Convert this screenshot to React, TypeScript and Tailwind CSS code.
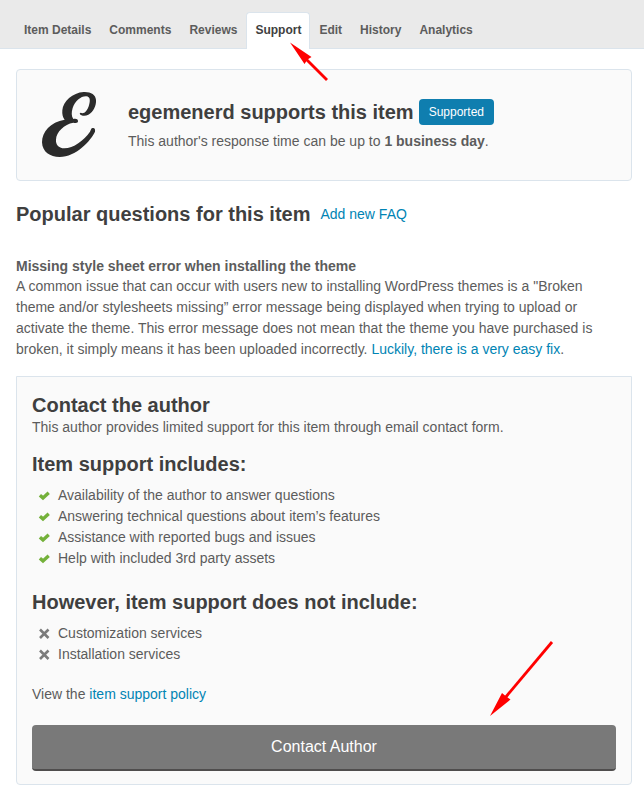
const tabs = ['Item Details', 'Comments', 'Reviews', 'Support', 'Edit', 'History', 'Analytics'];

const included = [
  'Availability of the author to answer questions',
  'Answering technical questions about item’s features',
  'Assistance with reported bugs and issues',
  'Help with included 3rd party assets',
];

const excluded = ['Customization services', 'Installation services'];

function AuthorLogo() {
  return (
    <svg className="h-[67px] w-14 shrink-0" viewBox="93 93 168 201" role="img" aria-label="egemenerd">
      <path
        fill="#2b2b2b"
        d="M209 161 C213 168 226 169 235 164 C251 155 259 137 258 120 C257 103 242 95 221 96 C188 98 159 124 157 151 C156 163 158 172 164 179 C121 186 96 216 96 247 C97 276 120 291 149 291 C198 290 242 243 255 215 C256 208 254 203 248 204 C243 204 244 208 240 215 C222 241 190 265 163 265 C145 264 137 253 138 239 C139 216 163 192 190 188 C199 190 204 189 204 183 C204 176 196 175 190 177 C184 169 184 157 188 144 C195 123 213 108 229 109 C241 110 241 122 237 136 C233 150 225 160 217 160 C213 158 211 157 209 161 Z"
      />
    </svg>
  );
}

function CheckIcon() {
  return (
    <svg className="h-3 w-3 shrink-0" viewBox="0 0 12 12" fill="none" stroke="#74b13a" strokeWidth="3.4" aria-hidden="true">
      <path d="M1.9 5.2 5 7.9 10.7 2.8" />
    </svg>
  );
}

function CrossIcon() {
  return (
    <svg className="h-3 w-3 shrink-0" viewBox="0 0 12 12" fill="none" stroke="#7b7b7b" strokeWidth="2.6" aria-hidden="true">
      <path d="M2 1.5 10.5 10M10.5 1.5 2 10" />
    </svg>
  );
}

export default function App() {
  return (
    <div
      className="relative bg-white text-sm leading-[21px] text-[#5c5c5c]"
      style={{ fontFamily: '"Liberation Sans", Arial, sans-serif' }}
    >
      <nav className="flex border-b border-[#dbe4ec] bg-[#eaeaea] px-[15px] pt-3">
        {tabs.map((tab) => (
          <a
            key={tab}
            href="#"
            className={
              tab === 'Support'
                ? '-mb-px rounded-t border border-b-0 border-[#dbe4ec] bg-white px-2 pt-[7px] pb-2 text-xs leading-5 font-bold text-[#3f3f3f]'
                : 'border border-b-0 border-transparent px-2 pt-[7px] pb-2 text-xs leading-5 font-bold'
            }
          >
            {tab}
          </a>
        ))}
      </nav>

      <main className="pt-5 pr-3 pb-4 pl-4">
        <section className="flex items-center gap-[31px] rounded border border-[#dbe4ec] bg-[#fafafa] pt-[21px] pr-4 pb-[22px] pl-6">
          <AuthorLogo />
          <div className="pt-[6px] pb-1">
            <div className="flex flex-wrap items-center gap-[5px]">
              <h2 className="text-xl leading-6 font-bold text-[#3f3f3f]">egemenerd supports this item</h2>
              <span className="rounded bg-[#0f7eaf] px-[10px] py-[3px] text-xs leading-5 text-white">Supported</span>
            </div>
            <p className="mt-[6px]">
              This author's response time can be up to <strong>1 business day</strong>.
            </p>
          </div>
        </section>

        <div className="mt-[21px] flex flex-wrap items-center gap-[10px]">
          <h2 className="text-xl leading-6 font-bold text-[#3f3f3f]">Popular questions for this item</h2>
          <a href="#" className="text-[#0084b4]">Add new FAQ</a>
        </div>

        <section className="mt-[30px]">
          <h3 className="leading-5 font-bold">Missing style sheet error when installing the theme</h3>
          <p className="max-w-[600px]">
            A common issue that can occur with users new to installing WordPress themes is a "Broken theme and/or
            stylesheets missing” error message being displayed when trying to upload or activate the theme. This error
            message does not mean that the theme you have purchased is broken, it simply means it has been uploaded
            incorrectly. <a href="#" className="text-[#0084b4]">Luckily, there is a very easy fix</a>.
          </p>
        </section>

        <section className="mt-4 rounded-b border border-[#dbe4ec] bg-[#fafafa] px-[15px] pt-4 pb-[13px]">
          <h2 className="text-xl leading-6 font-bold text-[#3f3f3f]">Contact the author</h2>
          <p>This author provides limited support for this item through email contact form.</p>

          <h2 className="mt-[14px] text-xl leading-6 font-bold text-[#3f3f3f]">Item support includes:</h2>
          <ul className="mt-[9px] pl-[6px]">
            {included.map((text) => (
              <li key={text} className="flex items-center gap-2">
                <CheckIcon />
                {text}
              </li>
            ))}
          </ul>

          <h2 className="mt-[21px] text-xl leading-6 font-bold text-[#3f3f3f]">However, item support does not include:</h2>
          <ul className="mt-[9px] pl-[6px]">
            {excluded.map((text) => (
              <li key={text} className="flex items-center gap-2">
                <CrossIcon />
                {text}
              </li>
            ))}
          </ul>

          <p className="mt-[19px]">
            View the <a href="#" className="text-[#0084b4]">item support policy</a>
          </p>
          <button
            type="button"
            className="mt-5 w-full rounded border-b-2 border-[#4f4d4d] bg-[#797979] py-[10px] text-base leading-6 text-white"
          >
            Contact Author
          </button>
        </section>
      </main>

      <svg className="pointer-events-none absolute top-[42px] left-[289px] h-10 w-10" viewBox="0 0 40 40" aria-hidden="true">
        <path d="M16 16 38 38" stroke="#f00" strokeWidth="2.8" />
        <path d="M1 .5 22.5 15 18.5 17.5 15.5 22Z" fill="#f00" />
      </svg>
      <svg className="pointer-events-none absolute top-[640px] right-[90px] h-[78px] w-[66px]" viewBox="0 0 66 78" aria-hidden="true">
        <path d="M64 2 17 58" stroke="#f00" strokeWidth="2.8" />
        <path d="M2 76 14 53 17 55.5 22.5 59.5Z" fill="#f00" />
      </svg>
    </div>
  );
}
